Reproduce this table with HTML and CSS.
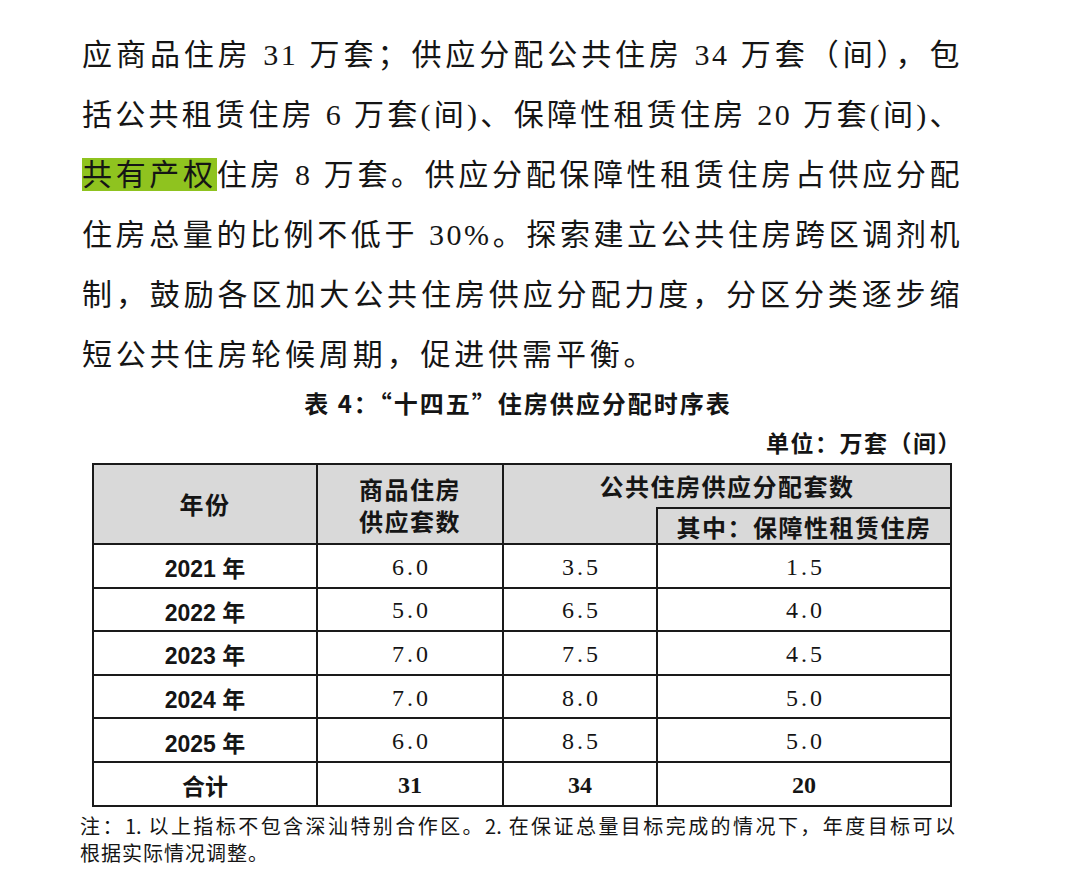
FILE: index.html
```html
<!DOCTYPE html>
<html lang="zh-CN">
<head>
<meta charset="utf-8">
<title>住房供应分配时序表</title>
<link rel="stylesheet" href="styles.css">
</head>
<body>
<div class="page">
  <div class="para">
    <p class="ln">应商品住房 31 万套；供应分配公共住房 34 万套（间），包</p>
    <p class="ln">括公共租赁住房 6 万套(间)、保障性租赁住房 20 万套(间)、</p>
    <p class="ln"><span class="hl">共有产权</span>住房 8 万套。供应分配保障性租赁住房占供应分配</p>
    <p class="ln">住房总量的比例不低于 30%。探索建立公共住房跨区调剂机</p>
    <p class="ln">制，鼓励各区加大公共住房供应分配力度，分区分类逐步缩</p>
    <p class="ln last">短公共住房轮候周期，促进供需平衡。</p>
  </div>
  <p class="caption">表 4：“十四五”住房供应分配时序表</p>
  <p class="unit">单位：万套（间）</p>
  <table class="supply">
    <colgroup>
      <col class="c1"><col class="c2"><col class="c3"><col class="c4">
    </colgroup>
    <thead>
      <tr class="hrow1">
        <th rowspan="2">年份</th>
        <th rowspan="2" class="two">商品住房<br>供应套数</th>
        <th colspan="2" class="pub">公共住房供应分配套数</th>
      </tr>
      <tr class="hrow2">
        <th class="blank"></th>
        <th class="sub">其中：保障性租赁住房</th>
      </tr>
    </thead>
    <tbody>
      <tr><td class="yr">2021 年</td><td class="num">6.0</td><td class="num">3.5</td><td class="num">1.5</td></tr>
      <tr><td class="yr">2022 年</td><td class="num">5.0</td><td class="num">6.5</td><td class="num">4.0</td></tr>
      <tr><td class="yr">2023 年</td><td class="num">7.0</td><td class="num">7.5</td><td class="num">4.5</td></tr>
      <tr><td class="yr">2024 年</td><td class="num">7.0</td><td class="num">8.0</td><td class="num">5.0</td></tr>
      <tr><td class="yr">2025 年</td><td class="num">6.0</td><td class="num">8.5</td><td class="num">5.0</td></tr>
      <tr class="total"><td class="yr">合计</td><td class="num">31</td><td class="num">34</td><td class="num">20</td></tr>
    </tbody>
  </table>
  <div class="note">
    <p class="nl">注：1. 以上指标不包含深汕特别合作区。2. 在保证总量目标完成的情况下，年度目标可以</p>
    <p class="nl last">根据实际情况调整。</p>
  </div>
</div>
</body>
</html>
```

FILE: styles.css
```css
html, body {
  margin: 0;
  padding: 0;
  background: #ffffff;
}

body {
  color: #151515;
  font-family: "Liberation Serif", "Noto Sans CJK SC", serif;
}

p {
  margin: 0;
}

.page {
  width: 880px;
  margin-left: 82px;
  padding-top: 25px;
}

.para .ln {
  font-size: 30px;
  line-height: 60px;
  height: 60px;
  letter-spacing: 2.5px;
  text-align: justify;
  text-align-last: justify;
  white-space: nowrap;
}

.para .ln.last {
  text-align: left;
  text-align-last: left;
  letter-spacing: 3.85px;
}

.hl {
  background: linear-gradient(#8fc31f, #8fc31f) no-repeat;
  background-size: 100% 37px;
  background-position: 0 55%;
}

.caption {
  font-family: "Noto Sans CJK SC", sans-serif;
  font-weight: 700;
  font-size: 24px;
  line-height: 36px;
  letter-spacing: 2px;
  text-align: center;
  margin-left: -8px;
}

.unit {
  font-family: "Noto Sans CJK SC", sans-serif;
  font-weight: 700;
  font-size: 23px;
  line-height: 42px;
  letter-spacing: 1.5px;
  text-align: right;
  padding-right: 0;
}

.supply {
  margin-left: 10px;
  width: 858px;
  border-collapse: collapse;
  table-layout: fixed;
}

.c1 { width: 224px; }
.c2 { width: 186px; }
.c3 { width: 154px; }
.c4 { width: 294px; }

.supply th,
.supply td {
  border: 2px solid #1a1a1a;
  padding: 0;
  text-align: center;
  vertical-align: middle;
}

.supply th {
  background: #d9d9d9;
  font-family: "Noto Sans CJK SC", sans-serif;
  font-weight: 700;
  font-size: 24px;
  letter-spacing: 1.5px;
  line-height: 32px;
}

.hrow1 th {
  height: 42px;
}

.hrow2 th {
  height: 32px;
}

.supply th.pub {
  border-bottom: none;
}

.supply th.blank {
  border-top: none;
}

.supply th.sub {
  border-top: 2px solid #1a1a1a;
  padding-top: 2px;
}

.supply th.two {
  padding-top: 2px;
}

.supply td {
  height: 38.6px;
  padding-top: 3px;
}

.supply td.yr {
  font-family: "Liberation Sans", "Noto Sans CJK SC", sans-serif;
  font-weight: 700;
  font-size: 23px;
}

.supply td.num {
  font-family: "Liberation Serif", serif;
  font-size: 24px;
  letter-spacing: 3px;
  text-indent: 3px;
}

.supply tr.total td.num {
  font-weight: 700;
  letter-spacing: 0;
  text-indent: 0;
}

.supply tr.total td.yr {
  font-family: "Noto Sans CJK SC", sans-serif;
}

.note {
  width: 875px;
  margin-left: -2px;
  padding-top: 5px;
  font-family: "Noto Sans CJK SC", sans-serif;
  font-size: 20px;
}

.note .nl {
  line-height: 27px;
  text-align: justify;
  text-align-last: justify;
  white-space: nowrap;
}

.note .nl.last {
  text-align: left;
  text-align-last: left;
  letter-spacing: 1px;
}
```
